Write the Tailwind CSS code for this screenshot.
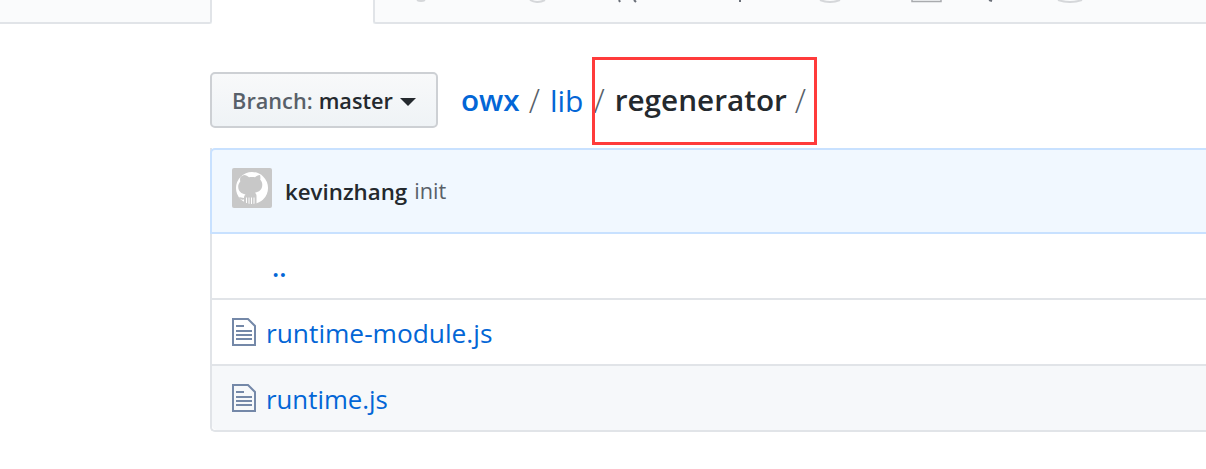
<!DOCTYPE html>
<html lang="en">
<head>
    <meta charset="UTF-8">
    <title>owx/lib/regenerator</title>
    <script src="https://cdn.jsdelivr.net/npm/@tailwindcss/browser@4"></script>
</head>
<body class="bg-white h-[469px] overflow-hidden font-['Open_Sans','Noto_Sans',sans-serif] text-[#24292e]">

    <!-- repo tabs, cut off by the top of the crop -->
    <div class="flex h-[24px] bg-[#fafbfc]">
        <div class="w-[212px] border-b-2 border-r-2 border-[#e1e4e8] rounded-br-[3px]"></div>
        <div class="w-[161px] bg-white"></div>
        <div class="flex-1 border-b-2 border-l-2 border-[#e1e4e8] rounded-bl-[3px]">
            <!-- bottoms of the tab icons and counters -->
            <svg class="block w-[831px] h-[3px]" viewBox="375 0 831 3" fill="none">
                <path d="M417 0q4 2 8 0M530 0q7 4 15 0M820 0q10 4 20 0M1058 0q12 4 24 0" stroke="#d5d7da" stroke-width="2"/>
                <path d="M619 0l1 2M634 0l2 2M740 0v2M989 0l3 1" stroke="#6a6f78" stroke-width="2"/>
                <path d="M912 0v1.500h29v-1.500" stroke="#a9abae" stroke-width="1.500"/>
            </svg>
        </div>
    </div>

    <div class="ml-[210px] mt-[48px]">
        <!-- branch + breadcrumb -->
        <div class="flex items-center h-[56px]">
            <button class="flex items-center w-[228px] h-[56px] pt-[3px] justify-center rounded-[5px] border-2 border-[#cdd0d4] bg-gradient-to-b from-[#f8f9fa] to-[#eff3f6] text-[21.7px] font-semibold">
                <span class="text-[#586069]">Branch:</span>
                <span class="ml-[6px]">master</span>
                <span class="ml-[7px] border-x-[8px] border-x-transparent border-t-[8px] border-t-[#24292e]"></span>
            </button>
            <div class="flex items-center ml-[23px] text-[29.7px] text-[#586069]">
                <a class="font-semibold text-[#0366d6]">owx</a>
                <span class="ml-[9px] mr-[10px] font-light text-[33px] leading-none">/</span>
                <a class="text-[#0366d6] text-[30px]">lib</a>
                <span class="ml-[10px] mr-[10px] font-light text-[33px] leading-none">/</span>
                <span class="font-semibold text-[#24292e]">regenerator</span>
                <span class="ml-[8px] font-light text-[33px] leading-none">/</span>
            </div>
        </div>

        <!-- file table -->
        <div class="mt-[20px] rounded-bl-[5px] border-l-2 border-b-2 border-[#e1e4e8]">
            <div class="flex items-center h-[86px] -ml-[2px] pl-[20px] bg-[#f1f8ff] border-2 border-r-0 border-[#c8e1ff] rounded-tl-[5px]">
                <svg class="w-[40px] h-[40px] -mt-[6px]" viewBox="0 0 40 40">
                    <rect width="40" height="40" rx="2" fill="#c8c8c8"/>
                    <circle cx="20" cy="20" r="16" fill="#fff"/>
                    <path fill="#c8c8c8" d="M12 7c2 0 3.800 1 5 2.300 2-.4 4-.4 6 0 1.200-1.300 3-2.300 5-2.300.5 1.600.6 3.200.2 4.600 1.400 1.500 2.100 3.300 2.100 5.200 0 5-3.300 7.300-7.300 7.900 1 .9 1.500 2 1.500 3.300v8h-2v-6.500h-1v7h-1.500v-7h-1v7h-1.500v-7h-1v7h-1.500v-7h-1v6.500h-2v-4.500c-2.500.5-4-.3-5-2.300 1.500 0 2.500.6 5 .8 0-1.500.4-2.600 1.500-3.500-4-.6-7.300-2.900-7.300-7.900 0-1.900.7-3.700 2.100-5.200-.4-1.400-.3-3 .2-4.600z"/>
                </svg>
                <span class="ml-[13px] mt-[1px] text-[22.300px] font-semibold">kevinzhang</span>
                <span class="ml-[7px] mt-[1px] text-[21.700px] text-[#586069]">init</span>
            </div>
            <div class="flex items-center h-[66px] pl-[60px] border-b-2 border-[#e1e4e8]">
                <a class="mt-[4px] text-[26.400px] font-semibold text-[#0366d6]">..</a>
            </div>
            <div class="flex items-center h-[66px] pl-[20px] border-b-2 border-[#e1e4e8]">
                <svg class="w-[24px] h-[28px]" viewBox="0 0 24 28" fill="none" stroke="#7488a8" stroke-width="2">
                    <path d="M1 1h15l7 7v19h-22z"/>
                    <path d="M4 8h8M4 13h16M4 17h16M4 21h16"/>
                </svg>
                <a class="ml-[10px] mt-[3px] text-[26.300px] text-[#0366d6]">runtime-module.js</a>
            </div>
            <div class="flex items-center h-[64px] pl-[20px] bg-[#f6f8fa] rounded-bl-[5px]">
                <svg class="w-[24px] h-[28px]" viewBox="0 0 24 28" fill="none" stroke="#7488a8" stroke-width="2">
                    <path d="M1 1h15l7 7v19h-22z"/>
                    <path d="M4 8h8M4 13h16M4 17h16M4 21h16"/>
                </svg>
                <a class="ml-[10px] mt-[3px] text-[25.800px] text-[#0366d6]">runtime.js</a>
            </div>
        </div>
    </div>

    <!-- red annotation box drawn over the screenshot -->
    <div class="absolute left-[592px] top-[57px] w-[225px] h-[88px] border-[3px] border-[#ff3b3b]"></div>
</body>
</html>
